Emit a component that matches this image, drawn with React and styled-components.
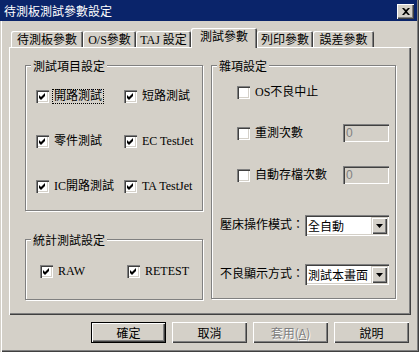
import React from 'react';
import styled, { createGlobalStyle } from 'styled-components';

const GlobalStyle = createGlobalStyle`
  html, body {
    margin: 0;
    padding: 0;
    background: #d4d0c8;
  }
  body {
    font-family: "Liberation Serif", "Noto Sans CJK TC", serif;
    font-size: 12px;
    color: #000;
  }
`;

const Window = styled.div`
  width: 419px;
  height: 352px;
  box-sizing: border-box;
  background: #d4d0c8;
  display: flex;
  flex-direction: column;
  box-shadow: inset 1px 0 #d4d0c8, inset 2px 0 #fff, inset -1px -1px #404040,
    inset -2px -2px #808080;
`;

const TitleBar = styled.div`
  height: 21px;
  margin-right: 2px;
  background: #0a246a;
  color: #fff;
  display: flex;
  align-items: center;
  justify-content: space-between;
  padding: 0 3px 0 4px;
  font-family: "Noto Sans CJK TC", sans-serif;
  font-size: 12px;
  line-height: 13px;
`;

const CloseButton = styled.div`
  width: 17px;
  height: 15px;
  margin-top: 2px;
  background: #d4d0c8;
  display: flex;
  align-items: center;
  justify-content: center;
  box-shadow: inset 1px 1px #fff, inset -1px -1px #404040, inset -2px -2px #808080;
`;

const Body = styled.div`
  flex: 1;
  display: flex;
  flex-direction: column;
  padding: 7px 0 0 9px;
`;

const TabStrip = styled.div`
  display: flex;
  align-items: flex-end;
  height: 19px;
  margin-left: 2px;
`;

const Tab = styled.div`
  position: relative;
  z-index: ${(p) => (p.$active ? 1 : 0)};
  box-sizing: border-box;
  width: ${(p) => p.$w}px;
  height: ${(p) => (p.$active ? 20 : 16)}px;
  margin-bottom: ${(p) => (p.$active ? -1 : 0)}px;
  padding-top: 3px;
  background: #d4d0c8;
  border-radius: 2px 2px 0 0;
  text-align: center;
  line-height: 13px;
  white-space: nowrap;
  box-shadow: inset 1px 1px #fff, inset -1px 0 #404040, inset -2px 0 #808080;
`;

const Panel = styled.div`
  width: 402px;
  height: 268px;
  box-sizing: border-box;
  display: grid;
  grid-template-columns: 178px 185px;
  column-gap: 8px;
  align-items: start;
  padding: 18px 0 0 16px;
  box-shadow: inset 1px 1px #fff, inset -1px -1px #404040, inset -2px -2px #808080;
`;

const Column = styled.div`
  display: flex;
  flex-direction: column;
  gap: 28px;
`;

const Group = styled.div`
  box-sizing: border-box;
  height: ${(p) => p.$h}px;
  border: 1px solid #808080;
  box-shadow: inset 1px 1px #fff, 1px 1px #fff;
  display: flex;
  flex-direction: column;
  padding: ${(p) => p.$pad || '0'};
`;

const Legend = styled.div`
  align-self: flex-start;
  margin: -7px 0 0 ${(p) => p.$ml || 5}px;
  padding: 0 2px;
  background: #d4d0c8;
  line-height: 13px;
  font-family: "Noto Sans CJK TC", sans-serif;
`;

const CheckGrid = styled.div`
  display: grid;
  grid-template-columns: ${(p) => p.$col}px auto;
  grid-auto-rows: 13px;
  row-gap: 32px;
  margin-top: ${(p) => p.$mt}px;
  padding-left: ${(p) => p.$pl}px;
`;

const CheckItem = styled.div`
  display: flex;
  align-items: center;
  gap: 4px;
  height: 13px;
  white-space: nowrap;
`;

const Box = styled.span`
  flex: none;
  width: 13px;
  height: 13px;
  background: #fff;
  display: flex;
  align-items: center;
  justify-content: center;
  box-shadow: inset 1px 1px #808080, inset 2px 2px #404040, inset -1px -1px #fff,
    inset -2px -2px #d4d0c8;
`;

const Label = styled.span`
  line-height: 13px;
  padding: 0 1px;
  outline: ${(p) => (p.$focus ? '1px dotted #000' : 'none')};
`;

const Row = styled.div`
  display: flex;
  align-items: center;
  justify-content: space-between;
  margin-top: ${(p) => p.$mt}px;
  padding-left: ${(p) => p.$pl}px;
  padding-right: 6px;
`;

const Edit = styled.div`
  box-sizing: border-box;
  width: 46px;
  height: 18px;
  padding: 2px 0 0 3px;
  color: #808080;
  font-family: "Liberation Sans", sans-serif;
  font-size: 12px;
  line-height: 14px;
  box-shadow: inset 1px 1px #808080, inset 2px 2px #404040, inset -1px -1px #fff,
    inset -2px -2px #d4d0c8;
`;

const Combo = styled.div`
  box-sizing: border-box;
  width: 84px;
  height: 21px;
  padding: 2px;
  display: flex;
  background: #fff;
  box-shadow: inset 1px 1px #808080, inset 2px 2px #404040, inset -1px -1px #fff,
    inset -2px -2px #d4d0c8;
`;

const ComboText = styled.div`
  flex: 1;
  overflow: hidden;
  white-space: nowrap;
  padding-left: 1px;
  line-height: 17px;
  font-family: "Noto Sans CJK TC", sans-serif;
`;

const ComboButton = styled.div`
  flex: none;
  width: 16px;
  height: 17px;
  background: #d4d0c8;
  display: flex;
  align-items: center;
  justify-content: center;
  box-shadow: inset 1px 1px #d4d0c8, inset 2px 2px #fff, inset -1px -1px #404040,
    inset -2px -2px #808080;
`;

const ButtonRow = styled.div`
  width: 402px;
  display: flex;
  justify-content: flex-end;
  gap: 6px;
  margin-top: 7px;
  padding-right: 2px;
  box-sizing: border-box;
`;

const Button = styled.div`
  box-sizing: border-box;
  width: 75px;
  height: 21px;
  display: flex;
  align-items: center;
  justify-content: center;
  font-family: "Noto Sans CJK TC", sans-serif;
  font-size: 12px;
  color: ${(p) => (p.$disabled ? '#808080' : '#000')};
  text-shadow: ${(p) => (p.$disabled ? '1px 1px #fff' : 'none')};
  border: ${(p) => (p.$default ? '1px solid #000' : 'none')};
  box-shadow: inset 1px 1px #fff, inset -1px -1px #404040, inset -2px -2px #808080;
`;

const Check = ({ checked }) => (
  <Box>
    {checked && (
      <svg width="7" height="7" viewBox="0 0 7 7">
        <path d="M0 2 L2 4 L6 0 L6 3 L2 7 L0 5 Z" fill="#000" />
      </svg>
    )}
  </Box>
);

const CheckOption = ({ checked, focus, children }) => (
  <CheckItem>
    <Check checked={checked} />
    <Label $focus={focus}>{children}</Label>
  </CheckItem>
);

const Arrow = () => (
  <svg width="7" height="4" viewBox="0 0 7 4">
    <path d="M0 0 H7 L3.5 4 Z" fill="#000" />
  </svg>
);

const tabs = [
  { label: '待測板參數', w: 72 },
  { label: 'O/S參數', w: 53 },
  { label: 'TAJ 設定', w: 55 },
  { label: '測試參數', w: 66, active: true },
  { label: '列印參數', w: 56 },
  { label: '誤差參數', w: 61 },
];

export default function App() {
  return (
    <>
      <GlobalStyle />
      <Window>
        <TitleBar>
          <span>待測板測試參數設定</span>
          <CloseButton>
            <svg width="8" height="7" viewBox="0 0 8 7">
              <path d="M0 0 H2 L4 2 L6 0 H8 L5 3.5 L8 7 H6 L4 5 L2 7 H0 L3 3.5 Z" fill="#000" />
            </svg>
          </CloseButton>
        </TitleBar>
        <Body>
          <TabStrip>
            {tabs.map((t) => (
              <Tab key={t.label} $w={t.w} $active={t.active}>
                {t.label}
              </Tab>
            ))}
          </TabStrip>
          <Panel>
            <Column>
              <Group $h={146}>
                <Legend>測試項目設定</Legend>
                <CheckGrid $col={88} $pl={10} $mt={18}>
                  <CheckOption checked focus>開路測試</CheckOption>
                  <CheckOption checked>短路測試</CheckOption>
                  <CheckOption checked>零件測試</CheckOption>
                  <CheckOption checked>EC TestJet</CheckOption>
                  <CheckOption checked>IC開路測試</CheckOption>
                  <CheckOption checked>TA TestJet</CheckOption>
                </CheckGrid>
              </Group>
              <Group $h={61}>
                <Legend>統計測試設定</Legend>
                <CheckGrid $col={87} $pl={14} $mt={19}>
                  <CheckOption checked>RAW</CheckOption>
                  <CheckOption checked>RETEST</CheckOption>
                </CheckGrid>
              </Group>
            </Column>
            <Group $h={234}>
              <Legend>雜項設定</Legend>
              <Row $mt={14} $pl={25}>
                <CheckOption>OS不良中止</CheckOption>
              </Row>
              <Row $mt={25} $pl={25}>
                <CheckOption>重測次數</CheckOption>
                <Edit>0</Edit>
              </Row>
              <Row $mt={24} $pl={25}>
                <CheckOption>自動存檔次數</CheckOption>
                <Edit>0</Edit>
              </Row>
              <Row $mt={31} $pl={7}>
                <Label>壓床操作模式：</Label>
                <Combo>
                  <ComboText>全自動</ComboText>
                  <ComboButton>
                    <Arrow />
                  </ComboButton>
                </Combo>
              </Row>
              <Row $mt={28} $pl={7}>
                <Label>不良顯示方式：</Label>
                <Combo>
                  <ComboText>測試本畫面</ComboText>
                  <ComboButton>
                    <Arrow />
                  </ComboButton>
                </Combo>
              </Row>
            </Group>
          </Panel>
          <ButtonRow>
            <Button $default>確定</Button>
            <Button>取消</Button>
            <Button $disabled>
              套用(<u>A</u>)
            </Button>
            <Button>說明</Button>
          </ButtonRow>
        </Body>
      </Window>
    </>
  );
}
